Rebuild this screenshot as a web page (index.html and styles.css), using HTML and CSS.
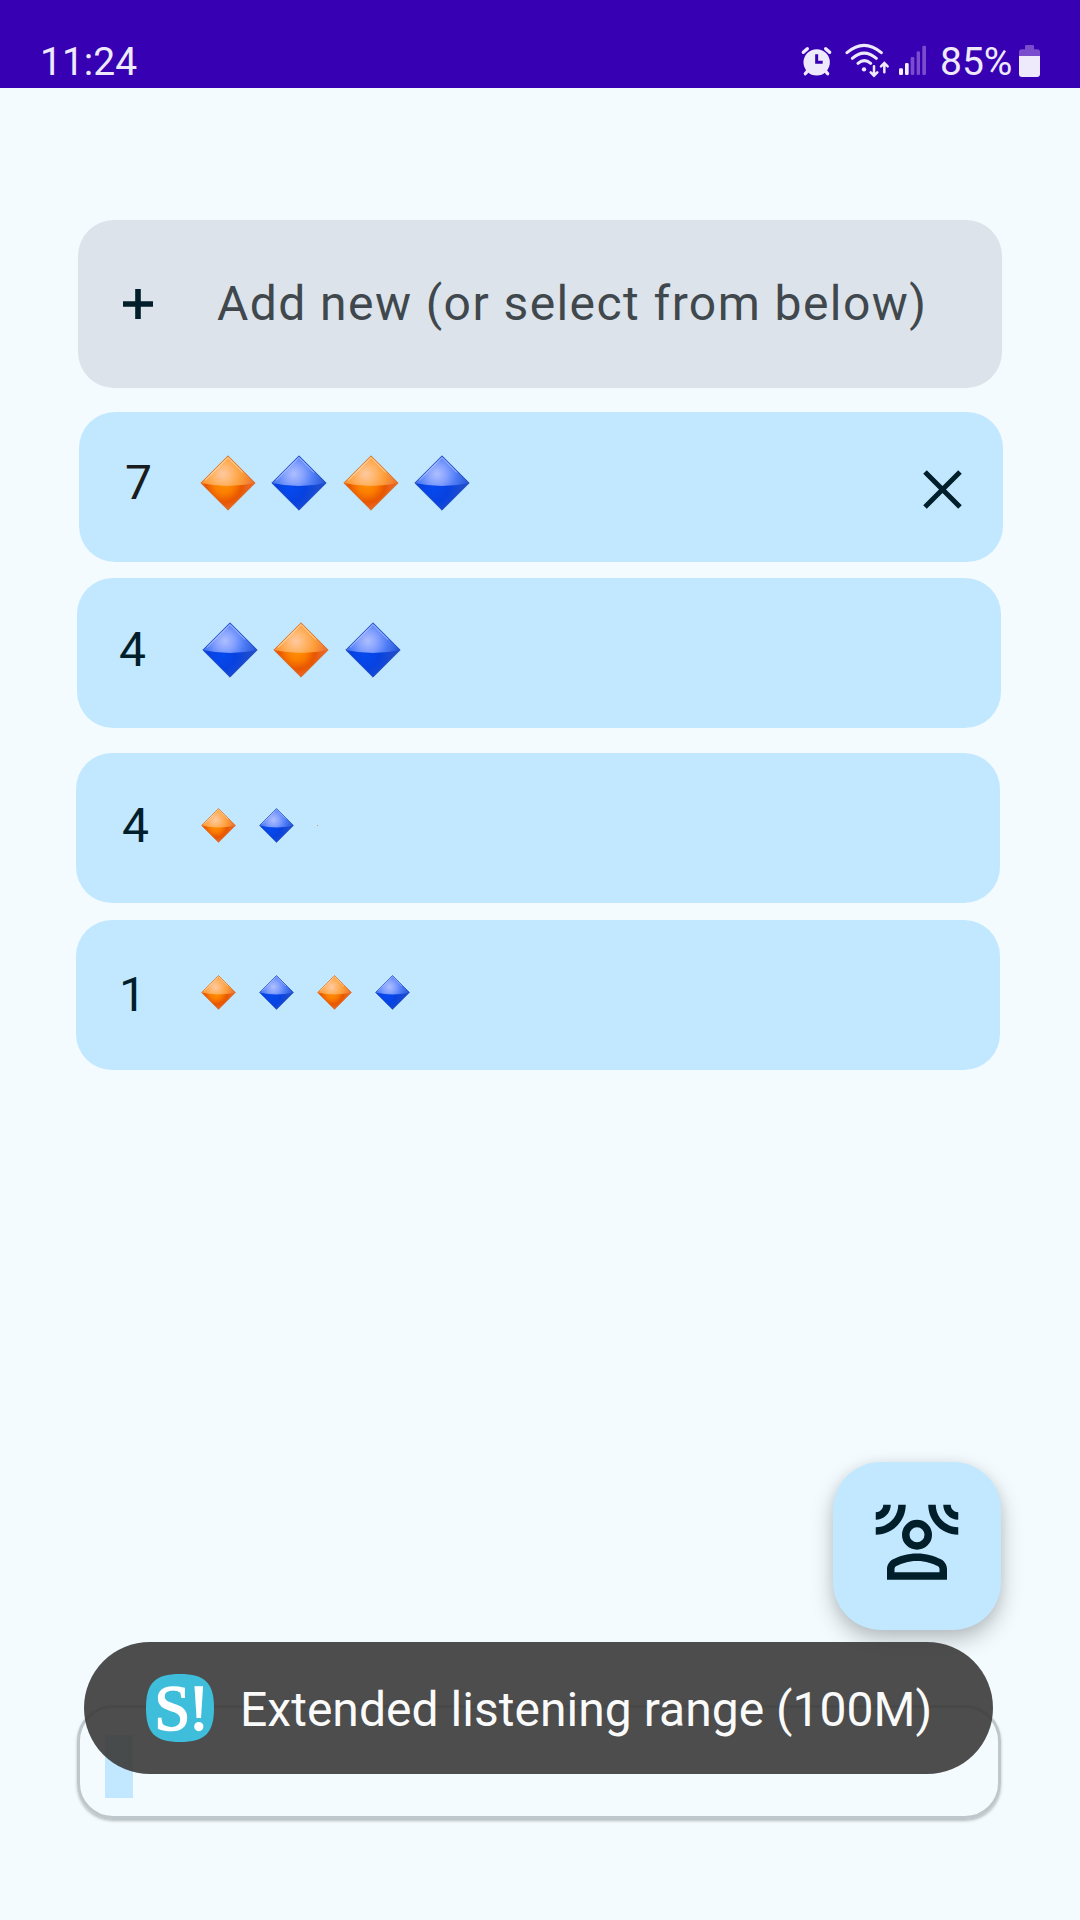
FILE: index.html
```html
<!DOCTYPE html>
<html lang="en">
<head>
<meta charset="utf-8">
<meta name="viewport" content="width=device-width">
<title>Sequences</title>
<link rel="stylesheet" href="styles.css">
</head>
<body>
<svg class="defs" aria-hidden="true">
  <defs>
    <radialGradient id="orange-low" gradientUnits="userSpaceOnUse" cx="24" cy="29" r="24">
      <stop offset="0" stop-color="#ff9200"/><stop offset=".4" stop-color="#fb7d00"/><stop offset=".75" stop-color="#e85600"/><stop offset="1" stop-color="#ea6420"/>
    </radialGradient>
    <radialGradient id="orange-top" gradientUnits="userSpaceOnUse" cx="23" cy="19" r="32">
      <stop offset="0" stop-color="#ffc9a2"/><stop offset=".3" stop-color="#ffb569"/><stop offset=".6" stop-color="#fd9c38"/><stop offset="1" stop-color="#ea7030"/>
    </radialGradient>
    <radialGradient id="blue-low" gradientUnits="userSpaceOnUse" cx="20" cy="33" r="28">
      <stop offset="0" stop-color="#0549f0"/><stop offset=".5" stop-color="#0742e0"/><stop offset="1" stop-color="#1e4cce"/>
    </radialGradient>
    <radialGradient id="blue-top" gradientUnits="userSpaceOnUse" cx="23" cy="19" r="32">
      <stop offset="0" stop-color="#aebfff"/><stop offset=".3" stop-color="#86a2ff"/><stop offset=".6" stop-color="#4f7df6"/><stop offset="1" stop-color="#2656d8"/>
    </radialGradient>
    <symbol id="orange" viewBox="0 0 56 56">
      <path d="M28 .8 55.2 28 28 55.2 .8 28Z" fill="url(#orange-low)"/>
      <path d="M28 .8 55.2 28Q28 34 .8 28Z" fill="url(#orange-top)"/>
      <path d="M28 .8 55.2 28 28 55.2 .8 28Z" fill="none" stroke="#d0702a" stroke-opacity=".75" stroke-width="1"/>
      <path d="M5 25.5 28 2.6 43 17.6" fill="none" stroke="#ffe5c0" stroke-opacity=".8" stroke-width="1"/>
    </symbol>
    <symbol id="blue" viewBox="0 0 56 56">
      <path d="M28 .8 55.2 28 28 55.2 .8 28Z" fill="url(#blue-low)"/>
      <path d="M28 .8 55.2 28Q28 34 .8 28Z" fill="url(#blue-top)"/>
      <path d="M28 .8 55.2 28 28 55.2 .8 28Z" fill="none" stroke="#2149b8" stroke-opacity=".8" stroke-width="1"/>
      <path d="M5 25.5 28 2.6 43 17.6" fill="none" stroke="#b4c8ff" stroke-opacity=".8" stroke-width="1"/>
    </symbol>
  </defs>
</svg>

<header class="status-bar">
  <span class="clock">11:24</span>
  <svg class="icon-alarm" viewBox="120 132 99 99">
    <circle cx="170" cy="187" r="39.500" fill="#efeafb"/>
    <path d="M130 157 142 146M209 157 197 146M144 212 136 221M195 212 203 221" fill="none" stroke="#efeafb" stroke-width="10" stroke-linecap="round"/>
    <path d="M170 163V187H188" fill="none" stroke="#3700b3" stroke-width="9"/>
  </svg>
  <svg class="icon-wifi" viewBox="252 126 141 108">
    <g fill="none" stroke="#efeafb" stroke-width="9" stroke-linecap="round">
      <path d="M261 158Q312 114 364 158M277 175Q312 144 349 175M294 190Q313 174 332 190"/>
      <path d="M342 199V226M332 217 342 227 352 217M373 217V190M363 199 373 189 383 199" stroke-width="7.500"/>
    </g>
    <circle cx="312" cy="208" r="6.500" fill="#efeafb"/>
  </svg>
  <svg class="icon-signal" viewBox="414 132 87 99">
    <rect x="417" y="205" width="12" height="20" rx="4" fill="#f4efff"/>
    <rect x="435" y="189" width="11" height="36" rx="4" fill="#f4efff"/>
    <rect x="452" y="171" width="11" height="54" rx="4" fill="#7a4dcd"/>
    <rect x="470" y="154" width="10" height="71" rx="4" fill="#7a4dcd"/>
    <rect x="487" y="137" width="11" height="88" rx="4" fill="#7a4dcd"/>
  </svg>
  <span class="percent">85%</span>
  <svg class="icon-battery" viewBox="774 132 69 102">
    <path d="M777 168V156Q777 148 785 148H795V139Q795 135 799 135H818Q822 135 822 139V148H832Q840 148 840 156V168Z" fill="#7a4dcd"/>
    <path d="M777 168H840V222Q840 231 831 231H786Q777 231 777 222Z" fill="#efeafb"/>
  </svg>
</header>

<main class="screen">
  <section class="card card-add">
    <svg class="plus" viewBox="0 0 30 30"><path d="M15 0V30M0 15H30" stroke="#001f2a" stroke-width="5.600"/></svg>
    <span class="add-label">Add new (or select from below)</span>
  </section>

  <section class="card row row-1">
    <span class="count">7</span>
    <div class="gems">
      <svg><use href="#orange"/></svg><svg><use href="#blue"/></svg><svg><use href="#orange"/></svg><svg><use href="#blue"/></svg>
    </div>
    <svg class="close" viewBox="0 0 39 39"><path d="M2 2 37 37M37 2 2 37" stroke="#001f2a" stroke-width="5"/></svg>
  </section>

  <section class="card row row-2">
    <span class="count">4</span>
    <div class="gems">
      <svg><use href="#blue"/></svg><svg><use href="#orange"/></svg><svg><use href="#blue"/></svg>
    </div>
  </section>

  <section class="card row row-3">
    <span class="count">4</span>
    <div class="gems gems-small">
      <svg><use href="#orange"/></svg><svg><use href="#blue"/></svg><i class="speck"></i>
    </div>
  </section>

  <section class="card row row-4">
    <span class="count">1</span>
    <div class="gems gems-small">
      <svg><use href="#orange"/></svg><svg><use href="#blue"/></svg><svg><use href="#orange"/></svg><svg><use href="#blue"/></svg>
    </div>
  </section>

  <button class="fab" aria-label="Listening range">
    <svg viewBox="0 0 24 24" fill="#001f2a">
      <path d="M9 1H7c0 3.310-2.690 6-6 6v2c4.420 0 8-3.580 8-8zM5 1H3c0 1.100-.9 2-2 2v2c2.210 0 4-1.790 4-4zM15 1h2c0 3.310 2.690 6 6 6v2c-4.420 0-8-3.580-8-8zM19 1h2c0 1.100.9 2 2 2v2c-2.210 0-4-1.790-4-4z"/>
      <circle cx="12" cy="9" r="3" fill="none" stroke="#001f2a" stroke-width="2"/>
      <path fill-rule="evenodd" d="M18.390 15.560C16.710 14.700 14.530 14 12 14c-2.530 0-4.710.7-6.390 1.560C4.610 16.070 4 17.100 4 18.220V21h16v-2.780c0-1.120-.61-2.150-1.610-2.660zM18 19H6v-.78c0-.38.2-.72.52-.88C7.710 16.730 9.630 16 12 16c2.370 0 4.290.73 5.480 1.340.32.16.52.5.52.88V19z"/>
    </svg>
  </button>

  <div class="field"><span class="selection"></span></div>
</main>

<div class="toast">
  <svg class="app-icon" viewBox="0 0 68 68">
    <path d="M34 0C59 0 68 9 68 34S59 68 34 68 0 59 0 34 9 0 34 0Z" fill="#3fbedb"/>
    <text class="app-letter" x="8.3 42" y="55.500">S!</text>
  </svg>
  <span class="toast-text">Extended listening range (100M)</span>
</div>
</body>
</html>
```

FILE: styles.css
```css
* { box-sizing: border-box; }

body {
  margin: 0;
  position: relative;
  width: 1080px;
  height: 1920px;
  overflow: hidden;
  background: #f3fbff;
  font-family: Roboto, sans-serif;
}

svg { display: block; flex: none; }
.defs { position: absolute; width: 0; height: 0; }

.status-bar {
  display: flex;
  align-items: flex-start;
  height: 88px;
  padding: 44px 39px 0 40px;
  background: #3700b3;
  color: #efeafb;
  font-size: 39px;
  line-height: 36px;
  white-space: nowrap;
}
.clock { margin-right: auto; }
.icon-alarm { width: 33px; height: 33px; margin-right: 11px; }
.icon-wifi { width: 47px; height: 36px; margin: -2px 7px 0 0; }
.icon-signal { width: 29px; height: 33px; margin-right: 13px; }
.percent { width: 78px; }
.icon-battery { width: 23px; height: 34px; }

.screen {
  display: flex;
  flex-direction: column;
  height: 1832px;
  padding: 132px 76px 0;
}

.card {
  display: flex;
  flex: none;
  width: 924px;
  border-radius: 36px;
  background: #c2e8ff;
}
.card-add {
  height: 168px;
  margin-left: 2px;
  padding-left: 45px;
  align-items: center;
  background: #dce3ea;
}
.plus { width: 30px; height: 30px; margin-right: 64px; }
.add-label {
  color: #40484d;
  font-size: 48px;
  line-height: 56px;
  letter-spacing: 1.430px;
  white-space: nowrap;
}

.row { height: 150px; align-items: flex-start; color: #001f2a; }
.count { width: 80px; font-size: 48px; line-height: 56px; }
.gems { display: flex; gap: 15.400px; }
.gems svg { width: 56px; height: 56px; }
.gems-small { gap: 23px; }
.gems-small svg { width: 35px; height: 35px; }
.speck { width: 1px; height: 1px; margin-top: 17px; background: #e08a55; }

.row-1 { margin: 24px 0 0 3px; padding: 43px 41px 0 46px; }
.row-1 .count { width: 75px; color: #191c1e; }
.row-1 .close { width: 39px; height: 39px; margin: 15px 0 0 auto; }
.row-2 { margin: 16px 0 0 1px; padding: 44px 0 0 42px; }
.row-2 .count { width: 83px; }
.row-3 { margin-top: 25px; padding: 45px 0 0 46px; }
.row-3 .count { width: 79px; }
.row-4 { margin-top: 17px; padding: 47px 0 0 43px; }
.row-4 .count { width: 82px; }
.row-3 .gems { margin-top: 10px; }
.row-4 .gems { margin-top: 8px; }

.fab {
  display: flex;
  flex: none;
  align-self: flex-end;
  width: 168px;
  height: 168px;
  margin: 392px 3px 0 0;
  padding: 39px 0 0 39px;
  border: 0;
  border-radius: 48px;
  background: #c2e8ff;
  box-shadow: 0 10px 22px rgba(0, 0, 0, .24), 0 1px 12px rgba(0, 0, 0, .06);
}
.fab svg { width: 90px; height: 90px; }

.field {
  display: flex;
  flex: none;
  width: 924px;
  height: 114px;
  margin: 75px 0 0 1px;
  padding: 27px 0 0 25px;
  border: 3px solid #bec7cc;
  border-radius: 36px;
  box-shadow: 0 2px 3px rgba(0, 0, 0, .25);
}
.selection { width: 28px; height: 63px; background: #c2e8ff; }

/* Floats above the input field. */
.toast {
  position: absolute;
  top: 1642px;
  left: 84px;
  display: flex;
  align-items: center;
  width: 909px;
  height: 132px;
  padding-left: 62px;
  border-radius: 66px;
  background: rgba(58, 58, 56, .9);
}
.app-icon { width: 68px; height: 68px; margin-right: 26px; overflow: visible; }
.app-letter {
  fill: #fff;
  stroke: #fff;
  stroke-width: 1.500px;
  font-family: "Liberation Serif", serif;
  font-size: 65px;
}
.toast-text {
  padding-top: 3px;
  color: #fafafa;
  font-size: 48px;
  line-height: 56px;
  letter-spacing: .030px;
  white-space: nowrap;
}
```
